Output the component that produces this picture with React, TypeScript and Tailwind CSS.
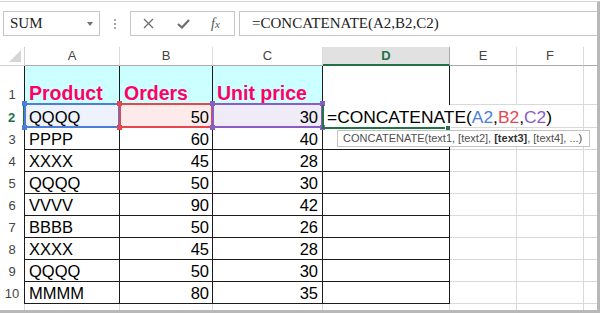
import React from 'react';

type Row = { name: string; orders: number; price: number };

const rows: Row[] = [
  { name: 'PPPP', orders: 60, price: 40 },
  { name: 'XXXX', orders: 45, price: 28 },
  { name: 'QQQQ', orders: 50, price: 30 },
  { name: 'VVVV', orders: 90, price: 42 },
  { name: 'BBBB', orders: 50, price: 26 },
  { name: 'XXXX', orders: 45, price: 28 },
  { name: 'QQQQ', orders: 50, price: 30 },
  { name: 'MMMM', orders: 80, price: 35 },
];

const rowHdr = 'flex items-end justify-center pb-[2px] text-[13px] leading-[16px] text-[#444] border-r border-r-[#1c1c1c]';
const dark = 'border-r border-b border-[#1c1c1c]';
const light = 'border-r border-b border-[#d9d9d9]';
const colHdr = 'flex items-center justify-center text-[13px] text-[#444] border-r border-r-[#d9d9d9] border-b border-b-[#ababab]';

const App: React.FC = () => {
  return (
    <div className="h-[313px] w-[600px] overflow-hidden bg-white pt-px font-['Liberation_Sans',Arial,sans-serif]">
      <div className="flex h-[312px] flex-col border-t border-t-[#d4d4d4] border-r-[3px] border-r-[#b8b8b8] border-b-[3px] border-b-[#b8b8b8]">
        {/* formula bar */}
        <div className="mt-[9px] flex h-[25px]">
          <div className="ml-[3px] flex w-[97px] items-center border border-[#c6c6c6] pl-[6px] pr-[6px]">
            <span className="font-['Liberation_Serif','Times_New_Roman',serif] text-[15px] text-[#222]">SUM</span>
            <span className="ml-auto h-0 w-0 border-l-[3px] border-r-[3px] border-t-[4px] border-l-transparent border-r-transparent border-t-[#707070]" />
          </div>
          <div className="flex w-[30px] flex-col items-center justify-center gap-[2px]">
            <span className="h-[2px] w-[2px] bg-[#a8a8a8]" />
            <span className="h-[2px] w-[2px] bg-[#a8a8a8]" />
            <span className="h-[2px] w-[2px] bg-[#a8a8a8]" />
          </div>
          <div className="flex w-[105px] items-center border border-[#c6c6c6] pl-[12px]">
            <svg width="11" height="11" viewBox="0 0 11 11">
              <path d="M1 1L10 10M10 1L1 10" stroke="#6e6e6e" strokeWidth="1.3" fill="none" />
            </svg>
            <svg className="ml-[23px]" width="13" height="10" viewBox="0 0 13 10">
              <path d="M1 5L5 8.5L12 1" stroke="#6e6e6e" strokeWidth="2.2" fill="none" />
            </svg>
            <span className="ml-[21px] font-['Liberation_Serif','Times_New_Roman',serif] text-[14px] italic text-[#555]">
              f<span className="text-[11px]">x</span>
            </span>
          </div>
          <div className="ml-[4px] flex flex-1 items-center border border-r-0 border-[#c6c6c6] pl-[12px]">
            <span className="font-['Liberation_Serif','Times_New_Roman',serif] text-[15px] text-[#222]">=CONCATENATE(A2,B2,C2)</span>
          </div>
        </div>

        {/* sheet */}
        <div className="mt-[11px] grid flex-1 grid-cols-[25px_95px_93px_110px_127px_67px_67px_13px] grid-rows-[19px_39px_23px_repeat(8,22px)_1fr]">
          {/* column headers */}
          <div className="flex items-end justify-end border-r border-b border-[#d0d0d0] pb-[3px] pr-[3px]">
            <svg width="12" height="12" viewBox="0 0 12 12">
              <path d="M12 0L12 12L0 12Z" fill="#d6d6d6" />
            </svg>
          </div>
          <div className={colHdr}>A</div>
          <div className={colHdr}>B</div>
          <div className={colHdr}>C</div>
          <div className="flex items-center justify-center border-r border-r-[#ababab] border-b-2 border-b-[#217346] bg-[#e1e1e1] text-[13px] font-bold text-[#217346]">D</div>
          <div className={colHdr}>E</div>
          <div className={colHdr}>F</div>
          <div className="border-b border-b-[#ababab]" />

          {/* row 1 */}
          <div className={rowHdr}>1</div>
          <div className={`${dark} flex items-end bg-[#ccffff] pl-[4px] text-[19.5px] font-bold leading-[22px] text-[#ff0066]`}>Product</div>
          <div className={`${dark} flex items-end bg-[#ccffff] pl-[4px] text-[19.5px] font-bold leading-[22px] text-[#ff0066]`}>Orders</div>
          <div className={`${dark} flex items-end bg-[#ccffff] pl-[4px] text-[19.5px] font-bold leading-[22px] text-[#ff0066]`}>Unit price</div>
          <div className="border-r border-r-[#1c1c1c]" />
          <div className={light} />
          <div className={light} />
          <div className="border-b border-[#d9d9d9]" />

          {/* row 2 */}
          <div className="flex items-end justify-center border-r-2 border-r-[#217346] pb-[2px] text-[13px] font-bold leading-[16px] text-[#217346]">2</div>
          <div className={`${dark} relative flex items-end bg-[#edf2fc] pl-[4px] text-[16.5px] leading-[20px] text-black`}>
            QQQQ
            <div className="pointer-events-none absolute -top-[2px] -bottom-px -left-px -right-px z-10 border-2 border-[#4a7ed9]">
              <span className="absolute -left-[4px] -top-[4px] h-[5px] w-[5px] bg-[#4a7ed9]" />
              <span className="absolute -right-[4px] -top-[4px] h-[5px] w-[5px] bg-[#4a7ed9]" />
              <span className="absolute -left-[4px] -bottom-[4px] h-[5px] w-[5px] bg-[#4a7ed9]" />
              <span className="absolute -right-[4px] -bottom-[4px] h-[5px] w-[5px] bg-[#4a7ed9]" />
            </div>
          </div>
          <div className={`${dark} relative flex items-end justify-end bg-[#fdeaea] pr-[3px] text-[16.5px] leading-[20px] text-black`}>
            50
            <div className="pointer-events-none absolute -top-[2px] -bottom-px -left-px -right-px z-10 border-2 border-[#e5474f]">
              <span className="absolute -left-[4px] -top-[4px] h-[5px] w-[5px] bg-[#e5474f]" />
              <span className="absolute -right-[4px] -top-[4px] h-[5px] w-[5px] bg-[#e5474f]" />
              <span className="absolute -left-[4px] -bottom-[4px] h-[5px] w-[5px] bg-[#e5474f]" />
              <span className="absolute -right-[4px] -bottom-[4px] h-[5px] w-[5px] bg-[#e5474f]" />
            </div>
          </div>
          <div className={`${dark} relative flex items-end justify-end bg-[#efebf7] pr-[4px] text-[16.5px] leading-[20px] text-black`}>
            30
            <div className="pointer-events-none absolute -top-[2px] -bottom-px -left-px -right-px z-10 border-2 border-[#8a5cc6]">
              <span className="absolute -left-[4px] -top-[4px] h-[5px] w-[5px] bg-[#8a5cc6]" />
              <span className="absolute -right-[4px] -top-[4px] h-[5px] w-[5px] bg-[#8a5cc6]" />
              <span className="absolute -left-[4px] -bottom-[4px] h-[5px] w-[5px] bg-[#8a5cc6]" />
              <span className="absolute -right-[4px] -bottom-[4px] h-[5px] w-[5px] bg-[#8a5cc6]" />
            </div>
          </div>
          <div className="relative z-20 flex items-end whitespace-nowrap pl-[4px] text-[17.4px] leading-[21px] text-black">
            <span>
              =CONCATENATE(<span className="text-[#4a7ed9]">A2</span>,<span className="text-[#e5474f]">B2</span>,<span className="text-[#8a5cc6]">C2</span>)
            </span>
            <span className="mb-[3px] ml-px h-[16px] w-px bg-black" />
            <div className="pointer-events-none absolute -left-px top-0 -bottom-px right-[3px] border-l-2 border-b-2 border-[#217346]">
              <span className="absolute -right-[4px] -bottom-[4px] h-[6px] w-[6px] border border-white bg-[#217346]" />
            </div>
            <div className="absolute left-[14px] top-[25px] flex h-[17px] w-[253px] items-center border border-[#c3c3c3] bg-white pl-[5px] text-[11px] text-[#4f4f4f]">
              CONCATENATE(text1, [text2],&nbsp;<b className="text-[#333]">[text3]</b>, [text4], ...)
            </div>
          </div>
          <div className="border-b border-[#d9d9d9]" />
          <div className={light} />
          <div className="border-b border-[#d9d9d9]" />

          {/* rows 3-10 */}
          {rows.map((r, i) => (
            <React.Fragment key={i}>
              <div className={rowHdr}>{i + 3}</div>
              <div className={`${dark} flex items-end pl-[4px] text-[16.5px] leading-[20px] text-black`}>{r.name}</div>
              <div className={`${dark} flex items-end justify-end pr-[3px] text-[16.5px] leading-[20px] text-black`}>{r.orders}</div>
              <div className={`${dark} flex items-end justify-end pr-[4px] text-[16.5px] leading-[20px] text-black`}>{r.price}</div>
              <div className={dark} />
              <div className={light} />
              <div className={light} />
              <div className="border-b border-[#d9d9d9]" />
            </React.Fragment>
          ))}

          {/* partial row 11 */}
          <div className="border-r border-[#d9d9d9]" />
          <div className="border-r border-[#d9d9d9]" />
          <div className="border-r border-[#d9d9d9]" />
          <div className="border-r border-[#d9d9d9]" />
          <div className="border-r border-[#d9d9d9]" />
          <div className="border-r border-[#d9d9d9]" />
          <div className="border-r border-[#d9d9d9]" />
          <div />
        </div>
      </div>
    </div>
  );
};

export default App;
